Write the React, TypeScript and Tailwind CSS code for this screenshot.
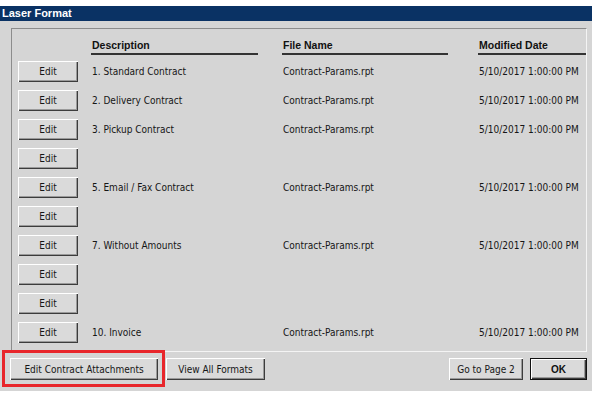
import React from "react";

const rows: { desc: string; file: string; date: string }[] = [
  { desc: "1. Standard Contract", file: "Contract-Params.rpt", date: "5/10/2017 1:00:00 PM" },
  { desc: "2. Delivery Contract", file: "Contract-Params.rpt", date: "5/10/2017 1:00:00 PM" },
  { desc: "3. Pickup Contract", file: "Contract-Params.rpt", date: "5/10/2017 1:00:00 PM" },
  { desc: "", file: "", date: "" },
  { desc: "5. Email / Fax Contract", file: "Contract-Params.rpt", date: "5/10/2017 1:00:00 PM" },
  { desc: "", file: "", date: "" },
  { desc: "7. Without Amounts", file: "Contract-Params.rpt", date: "5/10/2017 1:00:00 PM" },
  { desc: "", file: "", date: "" },
  { desc: "", file: "", date: "" },
  { desc: "10. Invoice", file: "Contract-Params.rpt", date: "5/10/2017 1:00:00 PM" },
];

const btn =
  "flex items-center justify-center bg-[#dadada] text-[#111] shadow-[inset_1px_1px_0_#ffffff,inset_-1px_-1px_0_#3c3c3c,inset_-2px_-2px_0_#9a9a9a]";

const reg = "font-['DejaVu_Sans_Condensed','Liberation_Sans',sans-serif] text-[10px] text-[#161616]";
const hdr = "font-['Liberation_Sans',Arial,sans-serif] font-bold text-[10.5px] text-[#111] leading-[13px]";

export default function App() {
  return (
    <div className="w-[597px] h-[393px] bg-white pt-[6px] overflow-hidden">
      <div className="relative w-[592px] h-[385px] bg-[#d5d5d5] flex flex-col">
        <div className="h-[15px] bg-[#0a3264] text-white font-['Liberation_Sans',Arial,sans-serif] font-bold text-[11px] leading-[15px] pl-[2px]">
          Laser Format
        </div>
        <div className="ml-[11px] mt-[7px] w-[576px] h-[324px] border border-t-[#8c8c8c] border-l-[#8c8c8c] border-r-[#f4f4f4] border-b-[#f4f4f4] flex flex-col pt-[10px]">
          <div className="flex pl-[6px]">
            <div className="w-[60px] shrink-0" />
            <div className="ml-[13px] w-[191px] shrink-0">
              <div className={`w-[167px] border-b-2 border-[#333] pb-[1px] pl-[1px] ${hdr}`}>Description</div>
            </div>
            <div className="w-[196px] shrink-0">
              <div className={`w-[166px] border-b-2 border-[#333] pb-[1px] pl-[1px] ${hdr}`}>File Name</div>
            </div>
            <div className="flex-1">
              <div className={`border-b-2 border-[#333] pb-[1px] pl-[1px] ${hdr}`}>Modified Date</div>
            </div>
          </div>
          <div className="mt-[2px] flex flex-col">
            {rows.map((r, i) => (
              <div key={i} className="h-[29px] flex items-center pl-[6px]">
                <div className={`w-[60px] h-[21px] shrink-0 ${btn} ${reg}`}>Edit</div>
                <div className={`ml-[13px] w-[191px] shrink-0 pl-[1px] ${reg}`}>{r.desc}</div>
                <div className={`w-[196px] shrink-0 pl-[1px] ${reg}`}>{r.file}</div>
                <div className={`flex-1 pl-[1px] ${reg}`}>{r.date}</div>
              </div>
            ))}
          </div>
        </div>
        <div className="flex mt-[6px] pl-[10px] pr-[5px]">
          <div className={`w-[148px] h-[22px] ${btn} ${reg}`}>Edit Contract Attachments</div>
          <div className={`ml-[8px] w-[99px] h-[22px] ${btn} ${reg}`}>View All Formats</div>
          <div className="flex-1" />
          <div className={`w-[74px] h-[22px] ${btn} ${reg}`}>Go to Page 2</div>
          <div className={`ml-[7px] w-[57px] h-[22px] border border-[#111] ${btn} font-['Liberation_Sans',Arial,sans-serif] font-bold text-[10px]`}>OK</div>
        </div>
        <div className="absolute left-[2px] top-[344px] w-[163px] h-[37px] border-[3px] border-[#e8262b]" />
      </div>
    </div>
  );
}
